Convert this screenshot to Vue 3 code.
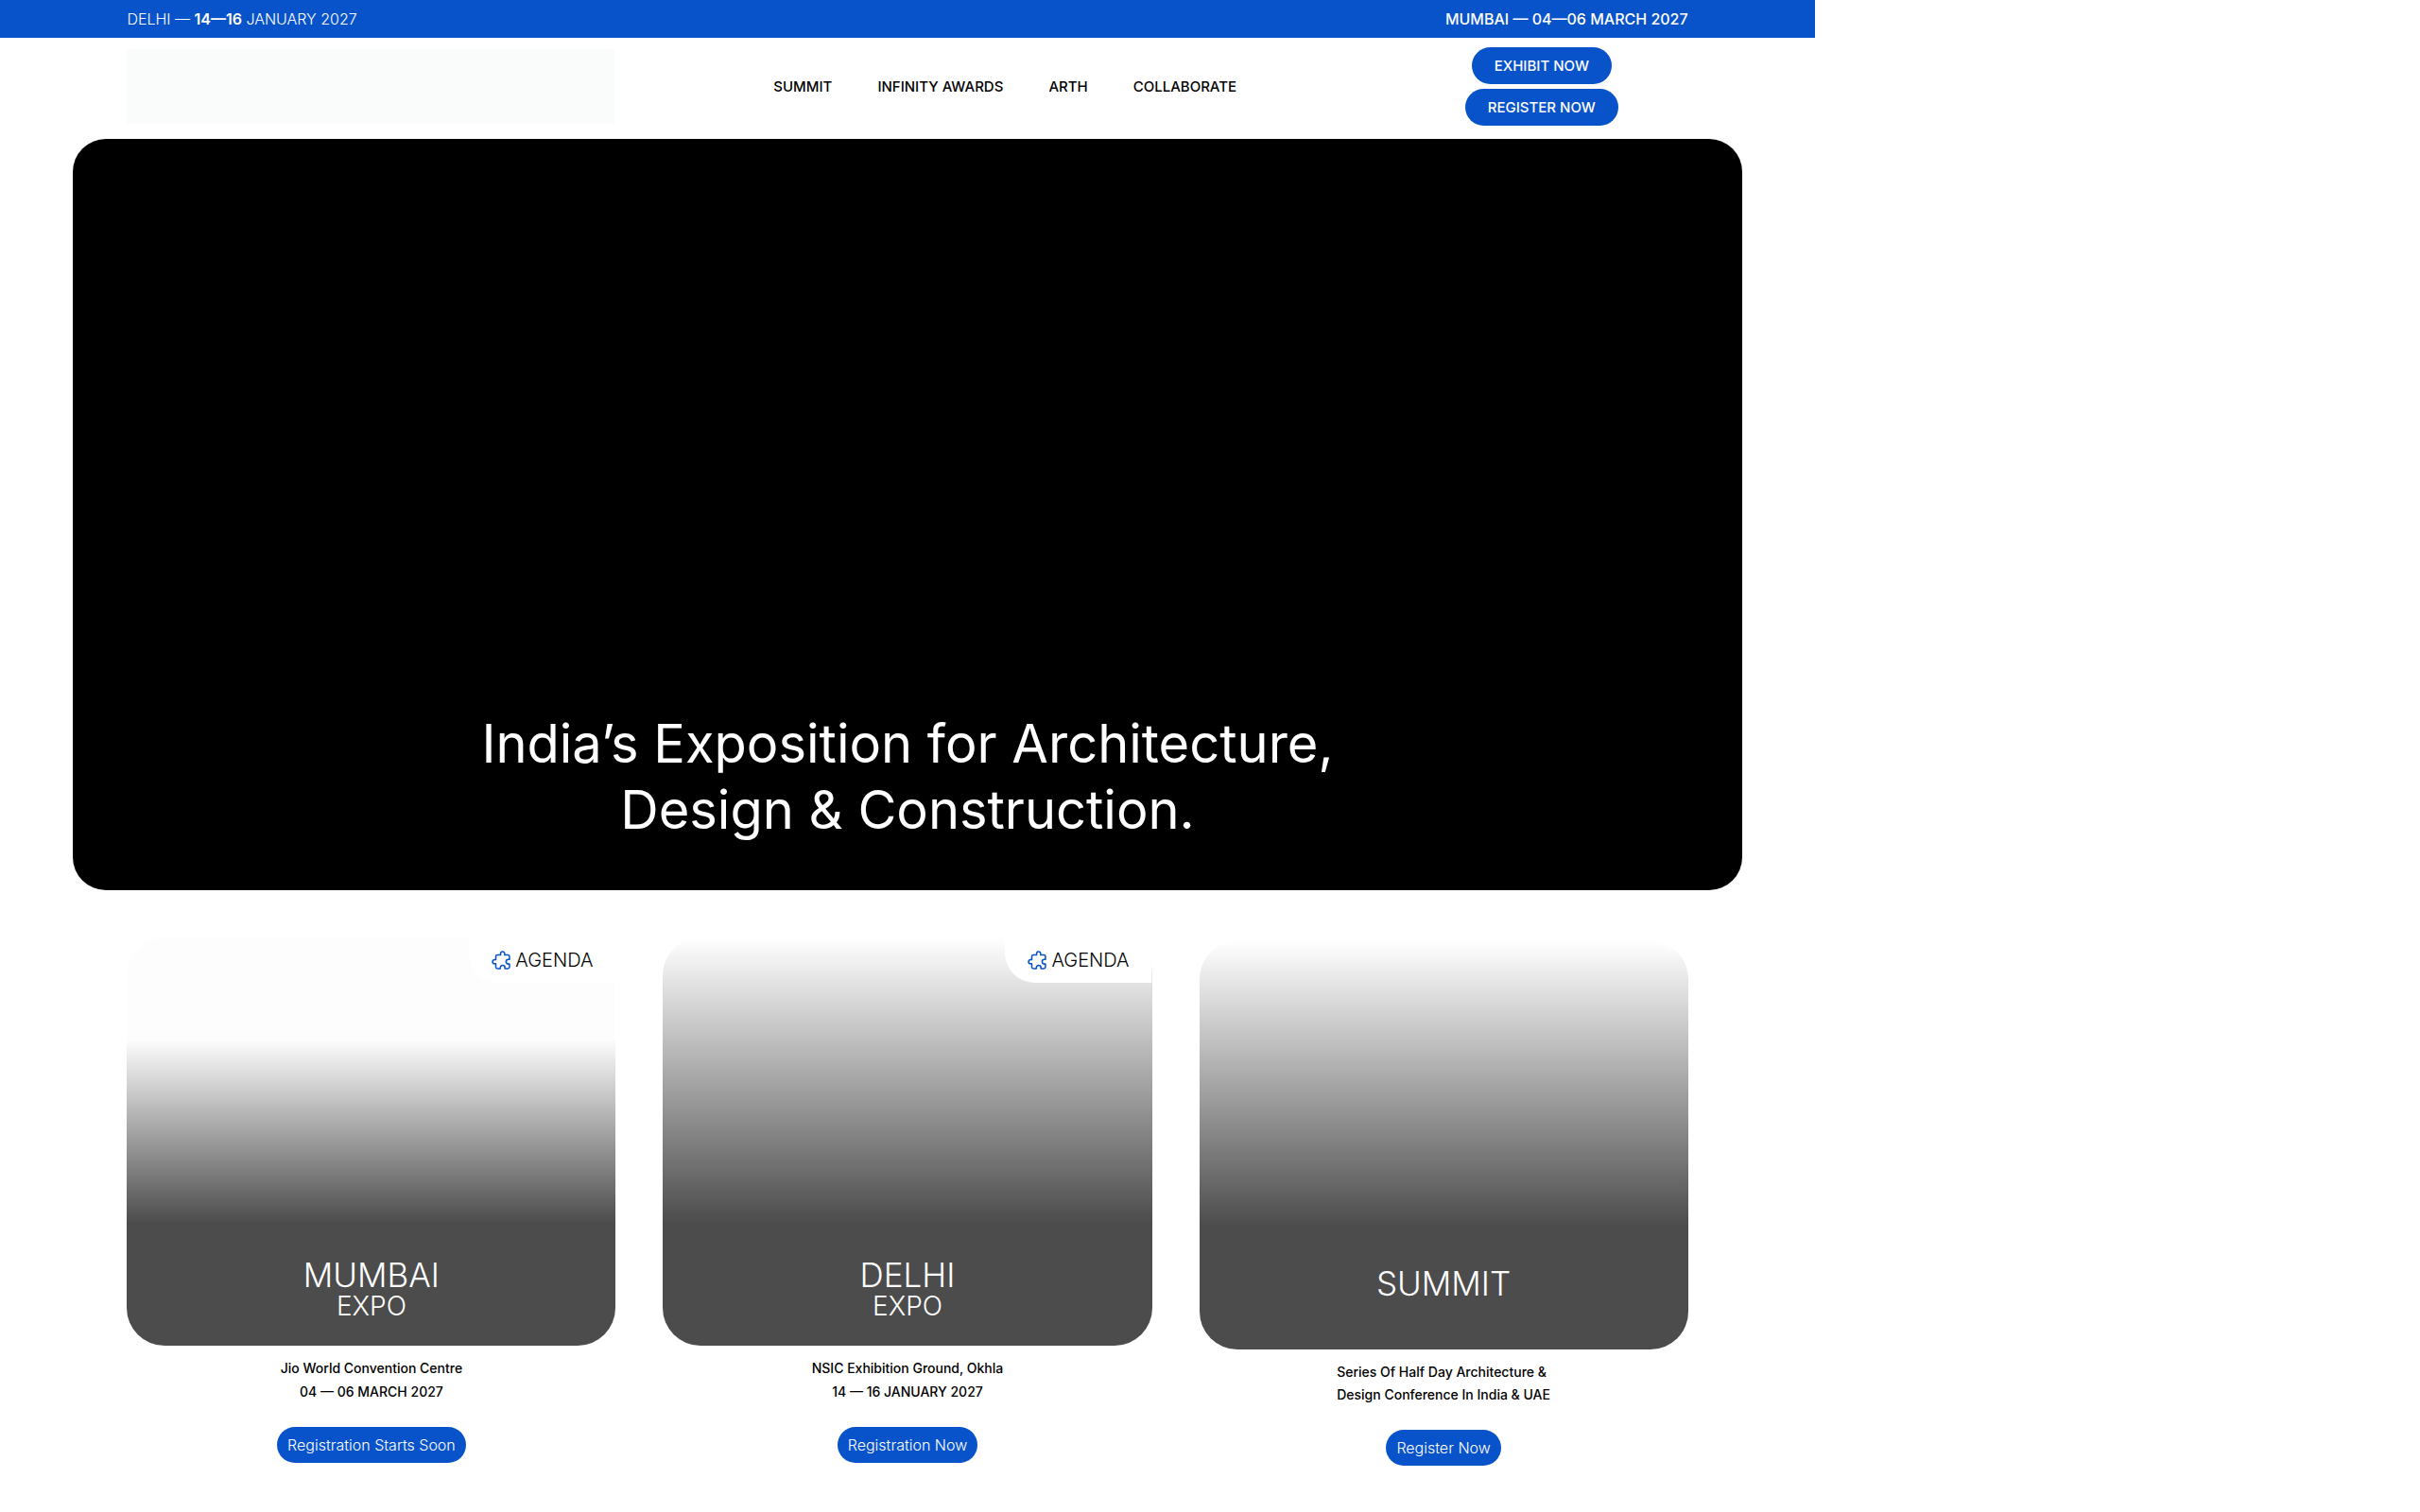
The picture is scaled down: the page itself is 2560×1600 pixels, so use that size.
<script setup>
const navLinks = ['SUMMIT', 'INFINITY AWARDS', 'ARTH', 'COLLABORATE']

const events = [
  {
    id: 'mumbai',
    title: 'MUMBAI',
    subtitle: 'EXPO',
    agenda: true,
    lines: ['Jio World Convention Centre', '04 — 06 MARCH 2027'],
    action: 'Registration Starts Soon',
  },
  {
    id: 'delhi',
    title: 'DELHI',
    subtitle: 'EXPO',
    agenda: true,
    lines: ['NSIC Exhibition Ground, Okhla', '14 — 16 JANUARY 2027'],
    action: 'Registration Now',
  },
  {
    id: 'summit',
    title: 'SUMMIT',
    subtitle: '',
    agenda: false,
    lines: ['Series Of Half Day Architecture &', 'Design Conference In India & UAE'],
    action: 'Register Now',
  },
]
</script>

<template>
  <div class="page">
    <div class="topbar">
      <span class="date-light">DELHI — <b>14—16</b> JANUARY 2027</span>
      <span class="date-medium">MUMBAI — 04—06 MARCH 2027</span>
    </div>

    <header class="header">
      <a class="logo" href="#" aria-label="Home"></a>
      <nav class="nav">
        <a v-for="link in navLinks" :key="link" href="#">{{ link }}</a>
      </nav>
      <div class="cta">
        <button type="button">EXHIBIT NOW</button>
        <button type="button">REGISTER NOW</button>
      </div>
    </header>

    <section class="hero">
      <h1>India’s Exposition for Architecture,<br />Design &amp; Construction.</h1>
    </section>

    <main class="events">
      <article v-for="event in events" :key="event.id" class="event" :class="event.id">
        <div class="card">
          <a v-if="event.agenda" class="agenda" href="#">
            <svg viewBox="0 0 512 512" aria-hidden="true">
              <path
                transform="matrix(-1 0 0 1 512 0)"
                d="M413.66 246.1H386a2 2 0 01-2-2v-77.24A38.86 38.86 0 00345.14 128H267.9a2 2 0 01-2-2V98.34c0-27.14-21.5-49.86-48.64-50.33a49.53 49.53 0 00-50.4 49.51V126a2 2 0 01-2 2H87.62A39.74 39.74 0 0048 167.62V238a2 2 0 002 2h26.91c29.37 0 53.68 25.48 54.09 54.85.42 29.87-23.51 57.15-53.29 57.15H50a2 2 0 00-2 2v70.38A39.74 39.74 0 0087.62 464H158a2 2 0 002-2v-20.93c0-30.28 24.75-56.35 55-57.06 30.1-.7 57 20.31 57 50.28V462a2 2 0 002 2h71.14A38.86 38.86 0 00384 425.14v-78a2 2 0 012-2h28.48c27.63 0 49.52-22.67 49.52-50.4s-23.2-48.64-50.34-48.64z"
              />
            </svg>
            <span>AGENDA</span>
          </a>
          <div class="card-title">
            <h2>{{ event.title }}</h2>
            <p v-if="event.subtitle">{{ event.subtitle }}</p>
          </div>
        </div>
        <div class="details">
          <p v-for="line in event.lines" :key="line">{{ line }}</p>
        </div>
        <button type="button">{{ event.action }}</button>
      </article>
    </main>
  </div>
</template>

<style>
body {
  margin: 0;
  background: #fff;
}
</style>

<style scoped>
.page {
  width: 75%;
  font-family: Inter, "Liberation Sans", sans-serif;
  font-weight: 300;
  color: #000;
}

h1,
h2,
p {
  margin: 0;
  font-weight: 300;
}

a {
  color: inherit;
  text-decoration: none;
}

button {
  border: 0;
  background: #0853c9;
  color: #fff;
  font-family: inherit;
  white-space: nowrap;
}

.topbar {
  display: flex;
  justify-content: space-between;
  padding: 0 7%;
  background: #0853c9;
  color: #fff;
  font-size: 16px;
  line-height: 40px;
}

.topbar b {
  font-weight: 600;
}

.date-medium {
  font-weight: 500;
}

.header {
  display: grid;
  grid-template-columns: 5fr 8fr 3fr;
  align-items: center;
  margin: 0 7%;
  padding: 10px 0 14px;
}

.logo {
  height: 79px;
  background: #fafcfb;
}

.nav {
  display: flex;
  justify-content: center;
  gap: 48px;
  font-size: 15px;
  font-weight: 500;
}

.cta {
  display: flex;
  flex-direction: column;
  align-items: center;
  gap: 5px;
}

.cta button {
  height: 39px;
  padding: 0 24px;
  border-radius: 20px;
  font-size: 15px;
  font-weight: 500;
}

.hero {
  display: flex;
  align-items: flex-end;
  justify-content: center;
  box-sizing: border-box;
  min-height: 795px;
  margin: 0 4%;
  padding-bottom: 50px;
  border-radius: 35px;
  background: #000;
  color: #fff;
  text-align: center;
}

.hero h1 {
  font-size: 56px;
  font-weight: 400;
  line-height: 70px;
}

.events {
  display: grid;
  grid-template-columns: repeat(3, 1fr);
  gap: 50px;
  margin: 50px 7% 0;
}

.event {
  display: flex;
  flex-direction: column;
  align-items: center;
}

.card {
  position: relative;
  display: flex;
  flex-direction: column;
  justify-content: flex-end;
  box-sizing: border-box;
  width: 100%;
  min-height: 432px;
  padding-bottom: 29px;
  border-radius: 40px;
  color: #fff;
  text-align: center;
  overflow: hidden;
}

.mumbai .card {
  background: linear-gradient(#fdfdfd 25%, #4c4c4c 70%);
}

.delhi .card,
.summit .card {
  background: linear-gradient(#fff 0%, #4c4c4c 70%);
}

.summit {
  padding-top: 4px;
}

.summit .card {
  padding-bottom: 50px;
}

.agenda {
  position: absolute;
  top: 0;
  right: 1px;
  display: flex;
  align-items: center;
  gap: 4px;
  box-sizing: border-box;
  height: 48px;
  padding: 0 23px;
  border-bottom-left-radius: 32px;
  background: #fff;
  color: #000;
  font-size: 20px;
}

.agenda svg {
  width: 22px;
  height: 24px;
  fill: none;
  stroke: #0853c9;
  stroke-width: 36;
}

.card-title h2 {
  font-size: 35px;
  line-height: 40px;
}

.card-title p {
  font-size: 28px;
  line-height: 26px;
}

.details {
  margin: 11px 0 25px;
  font-size: 14px;
  line-height: 25px;
  text-align: center;
}

.details p {
  font-weight: 500;
}

.summit .details {
  margin-top: 12px;
  line-height: 24px;
  text-align: left;
}

.event button {
  height: 38px;
  padding: 0 11px;
  border-radius: 19px;
  font-size: 16px;
  font-weight: 300;
}
</style>
